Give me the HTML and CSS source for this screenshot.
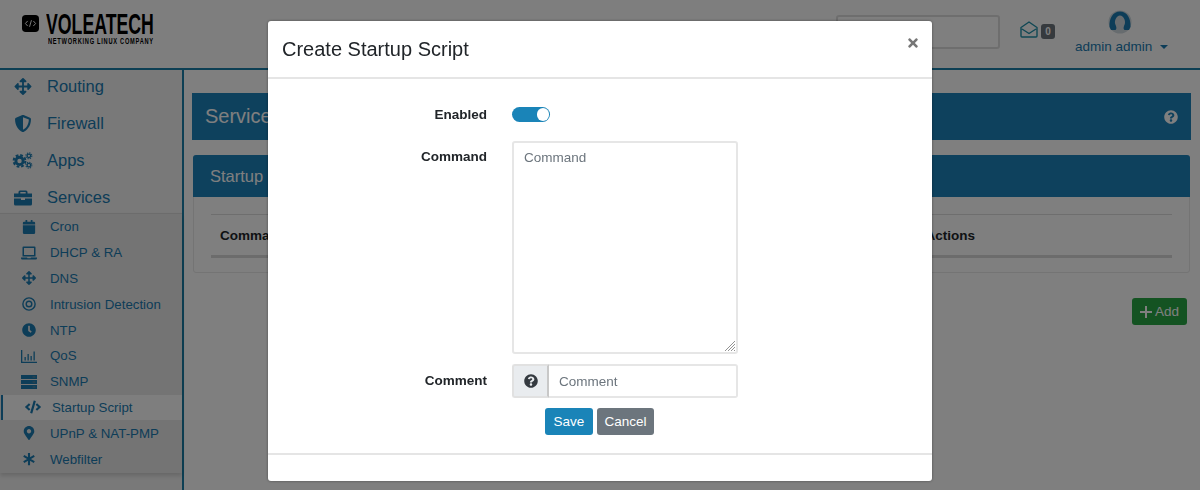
FILE: index.html
```html
<!DOCTYPE html>
<html lang="en">
<head>
<meta charset="utf-8">
<title>Startup Script</title>
<link rel="stylesheet" href="styles.css">
</head>
<body>
<div class="app">
  <header class="topbar">
    <div class="logo">
      <svg class="logo-mark" viewBox="0 0 18 18"><rect width="18" height="18" rx="4" fill="#000"/><path d="M6 6.300L3.600 9 6 11.700M12 6.300L14.400 9 12 11.700M10 5.500L8 12.500" fill="none" stroke="#fff" stroke-width="1"/></svg>
      <div class="logo-text">
        <div class="logo-name">VOLEATECH</div>
        <div class="logo-tag">NETWORKING LINUX COMPANY</div>
      </div>
    </div>
    <div class="top-right">
      <div class="search"></div>
      <svg class="mail" viewBox="0 0 18 17"><path d="M1 6.500L9 1l8 5.500V15a1 1 0 0 1-1 1H2a1 1 0 0 1-1-1zM2 8l7 4.500L16 8" fill="none" stroke="currentColor" stroke-width="1.400" stroke-linejoin="round"/></svg>
      <span class="badge">0</span>
      <div class="user">
        <svg class="avatar" viewBox="0 0 24 24"><circle cx="12" cy="12" r="11.500" fill="#cfd8de"/><path d="M1.500 17C1 8 5 1.500 12 1.500S23 8 22.500 17L21 20h-4.500c-1.500-1-1-3 .3-6 1-3-1-8.500-4.800-8.500S6.200 11 7.200 14c1.300 3 1.800 5 .3 6H3z" fill="currentColor"/></svg>
        <div class="user-name">admin admin <span class="caret"></span></div>
      </div>
    </div>
  </header>
  <div class="content">
    <aside class="sidebar">
      <nav class="nav-main">
        <a class="nav-item"><svg class="ic-main" viewBox="0 0 512 512"><path d="M352.201 425.775l-79.196 79.196c-9.373 9.373-24.568 9.373-33.941 0l-79.196-79.196c-15.119-15.119-4.411-40.971 16.971-40.97h51.162L228 284H127.196v51.162c0 21.382-25.851 32.09-40.971 16.971L7.029 272.937c-9.373-9.373-9.373-24.569 0-33.941L86.225 159.8c15.119-15.119 40.971-4.411 40.971 16.971V228H228V127.196h-51.23c-21.382 0-32.09-25.851-16.971-40.971l79.196-79.196c9.373-9.373 24.568-9.373 33.941 0l79.196 79.196c15.119 15.119 4.411 40.971-16.971 40.971h-51.162V228h100.804v-51.162c0-21.382 25.851-32.09 40.97-16.971l79.196 79.196c9.373 9.373 9.373 24.569 0 33.941L425.773 352.2c-15.119 15.119-40.971 4.411-40.97-16.971V284H284v100.804h51.23c21.382 0 32.09 25.851 16.971 40.971z"/></svg>Routing</a>
        <a class="nav-item"><svg class="ic-main" viewBox="0 0 512 512"><path d="M466.5 83.7l-192-80a48.15 48.15 0 0 0-36.9 0l-192 80C27.7 91.1 16 108.6 16 128c0 198.5 114.5 335.7 221.5 380.3 11.8 4.9 25.1 4.9 36.9 0C360.1 472.6 496 349.3 496 128c0-19.4-11.7-36.9-29.5-44.3zM256.1 446.3l-.1-381 175.9 73.3c-3.3 151.4-82.1 261.1-175.8 307.7z"/></svg>Firewall</a>
        <a class="nav-item"><svg class="ic-main ic-wide" viewBox="0 0 24 20"><g fill="none" stroke="currentColor"><circle cx="8.500" cy="10.500" r="4.300" stroke-width="3.400"/><circle cx="8.500" cy="10.500" r="6.900" stroke-width="2.400" stroke-dasharray="3.200 2.220"/><circle cx="19.500" cy="4.500" r="2.100" stroke-width="1.500"/><circle cx="19.500" cy="15.500" r="2.100" stroke-width="1.500"/><circle cx="19.500" cy="4.500" r="3.500" stroke-width="1.200" stroke-dasharray="1.500 1.250"/><circle cx="19.500" cy="15.500" r="3.500" stroke-width="1.200" stroke-dasharray="1.500 1.250"/></g></svg>Apps</a>
        <a class="nav-item"><svg class="ic-main" viewBox="0 0 18 16"><path d="M6 1h6a1.500 1.500 0 0 1 1.500 1.500V4H18v3.800H0V4h4.500V2.500A1.500 1.500 0 0 1 6 1zm.300 1.500V4h5.400V2.500zM0 9h7v1.500h4V9h7v5.500A1.500 1.500 0 0 1 16.500 16h-15A1.500 1.500 0 0 1 0 14.500z"/></svg>Services</a>
      </nav>
      <nav class="nav-sub">
        <a class="sub-item"><svg class="ic-sub" viewBox="0 0 14 16"><path d="M3 0h2v2h4V0h2v2h1.500A1.500 1.500 0 0 1 14 3.500V5H0V3.500A1.500 1.500 0 0 1 1.500 2H3zM0 6h14v8.500a1.500 1.500 0 0 1-1.500 1.500h-11A1.500 1.500 0 0 1 0 14.500z"/></svg>Cron</a>
        <a class="sub-item"><svg class="ic-sub" viewBox="0 0 16 13"><path d="M2.500 0h11a1 1 0 0 1 1 1v9h-13V1a1 1 0 0 1 1-1zm.5 1.500v7h10v-7zM0 11h6l.5.700h3l.5-.700h6v.700a1.300 1.300 0 0 1-1.300 1.300H1.300A1.300 1.300 0 0 1 0 11.700z"/></svg>DHCP &amp; RA</a>
        <a class="sub-item"><svg class="ic-sub" viewBox="0 0 512 512"><path d="M352.201 425.775l-79.196 79.196c-9.373 9.373-24.568 9.373-33.941 0l-79.196-79.196c-15.119-15.119-4.411-40.971 16.971-40.97h51.162L228 284H127.196v51.162c0 21.382-25.851 32.09-40.971 16.971L7.029 272.937c-9.373-9.373-9.373-24.569 0-33.941L86.225 159.8c15.119-15.119 40.971-4.411 40.971 16.971V228H228V127.196h-51.23c-21.382 0-32.09-25.851-16.971-40.971l79.196-79.196c9.373-9.373 24.568-9.373 33.941 0l79.196 79.196c15.119 15.119 4.411 40.971-16.971 40.971h-51.162V228h100.804v-51.162c0-21.382 25.851-32.09 40.97-16.971l79.196 79.196c9.373 9.373 9.373 24.569 0 33.941L425.773 352.2c-15.119 15.119-40.971 4.411-40.97-16.971V284H284v100.804h51.23c21.382 0 32.09 25.851 16.971 40.971z"/></svg>DNS</a>
        <a class="sub-item"><svg class="ic-sub" viewBox="0 0 16 16"><circle cx="8" cy="8" r="7" fill="none" stroke="currentColor" stroke-width="1.600"/><circle cx="8" cy="8" r="3.200" fill="none" stroke="currentColor" stroke-width="1.600"/></svg>Intrusion Detection</a>
        <a class="sub-item"><svg class="ic-sub" viewBox="0 0 512 512"><path d="M256,8C119,8,8,119,8,256S119,504,256,504,504,393,504,256,393,8,256,8Zm92.49,313h0l-20,25a16,16,0,0,1-22.49,2.5h0l-67-49.72a40,40,0,0,1-15-31.23V112a16,16,0,0,1,16-16h32a16,16,0,0,1,16,16V256l58,42.5A16,16,0,0,1,348.49,321Z"/></svg>NTP</a>
        <a class="sub-item"><svg class="ic-sub" viewBox="0 0 16 14"><path d="M0 1h1.300v11.700H16V14H0zM3.500 8h1.300v3.500H3.500zM6.500 5h1.300v6.500H6.500zM9.500 7h1.300v4.500H9.500zM12.500 2.500h1.300v9h-1.300z"/></svg>QoS</a>
        <a class="sub-item"><svg class="ic-sub" viewBox="0 0 16 14"><path d="M0 0h16v4H0zM0 5h16v4H0zM0 10h16v4H0z"/><path d="M11.500 2h3M11.500 7h3M11.500 12h3" stroke="#8a8a8a" stroke-width=".8"/></svg>SNMP</a>
        <a class="sub-item sub-active"><svg class="ic-sub" viewBox="0 0 640 512"><path d="M278.9 511.5l-61-17.7c-6.4-1.8-10-8.5-8.2-14.9L346.2 8.7c1.8-6.4 8.5-10 14.9-8.2l61 17.7c6.4 1.8 10 8.5 8.2 14.9L293.8 503.3c-1.9 6.4-8.5 10.1-14.9 8.2zm-114-112.2l43.5-46.4c4.6-4.9 4.3-12.7-.8-17.2L117 256l90.6-79.7c5.1-4.5 5.5-12.3.8-17.2l-43.5-46.4c-4.5-4.8-12.1-5.1-17-.5L3.8 247.2c-5.1 4.7-5.1 12.8 0 17.5l144.1 135.1c4.9 4.6 12.5 4.4 17-.5zm327.2.6l144.1-135.1c5.1-4.7 5.1-12.8 0-17.5L492.1 112.1c-4.8-4.5-12.4-4.3-17 .5L431.6 159c-4.6 4.9-4.3 12.7.8 17.2L523 256l-90.6 79.7c-5.1 4.5-5.5 12.3-.8 17.2l43.5 46.4c4.5 4.9 12.1 5.1 17 .6z"/></svg>Startup Script</a>
        <a class="sub-item"><svg class="ic-sub" viewBox="0 0 384 512"><path d="M172.268 501.67C26.97 291.031 0 268.413 0 192 0 85.961 85.961 0 192 0s192 85.961 192 192c0 76.413-26.97 99.031-172.268 309.67-9.535 13.774-29.93 13.773-39.464 0zM192 272c44.183 0 80-35.817 80-80s-35.817-80-80-80-80 35.817-80 80 35.817 80 80 80z"/></svg>UPnP &amp; NAT-PMP</a>
        <a class="sub-item"><svg class="ic-sub" viewBox="0 0 16 16"><path d="M8 1v14M2 4.500l12 7M14 4.500l-12 7" fill="none" stroke="currentColor" stroke-width="2.400"/></svg>Webfilter</a>
      </nav>
    </aside>
    <main class="main">
      <div class="banner">
        <span>Services</span>
        <svg class="banner-help" viewBox="0 0 512 512"><path d="M504 256c0 136.997-111.043 248-248 248S8 392.997 8 256C8 119.083 119.043 8 256 8s248 111.083 248 248zM262.655 90c-54.497 0-89.255 22.957-116.549 63.758-3.536 5.286-2.353 12.415 2.715 16.258l34.699 26.31c5.205 3.947 12.621 3.008 16.665-2.122 17.864-22.658 30.113-35.797 57.303-35.797 20.429 0 45.698 13.148 45.698 32.958 0 14.976-12.363 22.667-32.534 33.976C247.128 238.528 216 254.941 216 296v4c0 6.627 5.373 12 12 12h56c6.627 0 12-5.373 12-12v-1.333c0-28.462 83.186-29.647 83.186-106.667 0-58.002-60.165-102-116.531-102zM256 338c-25.365 0-46 20.635-46 46 0 25.364 20.635 46 46 46s46-20.636 46-46c0-25.365-20.635-46-46-46z"/></svg>
      </div>
      <section class="card">
        <div class="card-head">Startup Script</div>
        <div class="card-body">
          <div class="table-head"><span>Command</span><span>Actions</span></div>
        </div>
      </section>
      <div class="actions">
        <button class="add" type="button"><svg class="plus" viewBox="0 0 12 12"><path d="M6 .5v11M.5 6h11" fill="none" stroke="currentColor" stroke-width="2" stroke-linecap="round"/></svg>Add</button>
      </div>
    </main>
  </div>
</div>
<div class="backdrop"></div>
<div class="modal">
  <div class="modal-head">
    <h2>Create Startup Script</h2>
    <svg class="close" viewBox="0 0 352 512"><path d="M242.72 256l100.07-100.07c12.28-12.28 12.28-32.19 0-44.48l-22.24-22.24c-12.28-12.28-32.19-12.28-44.48 0L176 189.28 75.93 89.21c-12.28-12.28-32.19-12.28-44.48 0L9.21 111.45c-12.28 12.28-12.28 32.19 0 44.48L109.28 256 9.21 356.07c-12.28 12.28-12.28 32.19 0 44.48l22.24 22.24c12.28 12.28 32.2 12.28 44.48 0L176 322.72l100.07 100.07c12.28 12.28 32.2 12.28 44.48 0l22.24-22.24c12.28-12.28 12.28-32.19 0-44.48L242.72 256z"/></svg>
  </div>
  <form class="modal-body">
    <label class="lbl lbl-toggle">Enabled</label>
    <div class="toggle"><span class="knob"></span></div>
    <label class="lbl lbl-cmd">Command</label>
    <div class="cmd-wrap">
      <textarea class="cmd" placeholder="Command"></textarea>
      <svg class="grip" viewBox="0 0 12 12"><path d="M11 1L1 11M11 4L4 11M11 7L7 11M11 10L10 11" fill="none" stroke="#777" stroke-width=".8"/></svg>
    </div>
    <label class="lbl lbl-comment">Comment</label>
    <div class="group">
      <span class="prepend"><svg class="q" viewBox="0 0 512 512"><path d="M504 256c0 136.997-111.043 248-248 248S8 392.997 8 256C8 119.083 119.043 8 256 8s248 111.083 248 248zM262.655 90c-54.497 0-89.255 22.957-116.549 63.758-3.536 5.286-2.353 12.415 2.715 16.258l34.699 26.31c5.205 3.947 12.621 3.008 16.665-2.122 17.864-22.658 30.113-35.797 57.303-35.797 20.429 0 45.698 13.148 45.698 32.958 0 14.976-12.363 22.667-32.534 33.976C247.128 238.528 216 254.941 216 296v4c0 6.627 5.373 12 12 12h56c6.627 0 12-5.373 12-12v-1.333c0-28.462 83.186-29.647 83.186-106.667 0-58.002-60.165-102-116.531-102zM256 338c-25.365 0-46 20.635-46 46 0 25.364 20.635 46 46 46s46-20.636 46-46c0-25.365-20.635-46-46-46z"/></svg></span>
      <input class="comment" type="text" placeholder="Comment">
    </div>
    <div class="buttons">
      <button class="btn btn-save" type="button">Save</button>
      <button class="btn btn-cancel" type="button">Cancel</button>
    </div>
  </form>
  <div class="modal-foot"></div>
</div>
</body>
</html>
```
FILE: styles.css
```css
* { box-sizing: border-box; }
html, body { margin: 0; height: 490px; overflow: hidden; }
body { font-family: "Liberation Sans", Arial, sans-serif; color: #212529; background: #fff; }
svg { fill: currentColor; display: block; flex: none; }

.app { display: flex; flex-direction: column; height: 490px; }

.topbar { height: 70px; flex: none; display: flex; justify-content: space-between; border-bottom: 2px solid #1a7fa8; background: #fdfdfd; }
.logo { display: flex; padding: 12px 0 0 22px; gap: 7px; }
.logo-mark { width: 17px; height: 17px; margin-top: 3px; }
.logo-text { width: 108px; color: #000; }
.logo-name { font-weight: 700; font-size: 30px; line-height: 24px; white-space: nowrap; transform: scaleX(.59); transform-origin: left center; }
.logo-tag { font-weight: 700; font-size: 9.500px; line-height: 8px; letter-spacing: 1.200px; margin: 1px 0 0 2px; white-space: nowrap; transform: scaleX(.6); transform-origin: left center; }

.top-right { display: flex; align-items: flex-start; padding-right: 33px; }
.search { width: 164px; height: 34px; margin-top: 15px; border: 2px solid #ddd; border-radius: 3px; background: #fff; }
.mail { width: 18px; height: 17px; margin: 21px 0 0 20px; color: #1f8fa8; }
.badge { width: 14px; height: 15px; margin: 24px 0 0 3px; background: #6c757d; border-radius: 3px; color: #fff; font-size: 10px; font-weight: 700; line-height: 15px; text-align: center; }
.user { width: 92px; margin: 10px 0 0 20px; display: flex; flex-direction: column; align-items: flex-start; color: #1a7ab0; }
.avatar { width: 24px; height: 24px; margin-left: 33px; }
.user-name { margin-top: 5px; font-size: 13.500px; line-height: 16px; white-space: nowrap; }
.caret { display: inline-block; width: 0; height: 0; margin-left: 4px; vertical-align: 2px; border: 4px solid transparent; border-top-color: #1a7ab0; border-bottom: 0; }

.content { flex: 1; display: flex; min-height: 0; }

.sidebar { width: 184px; flex: none; border-right: 2px solid #1a7fa8; background: #f2f2f2; color: #1a7ab0; }
.nav-main { height: 145px; margin-top: -2px; }
.nav-item { height: 37px; display: flex; align-items: center; gap: 15px; padding-left: 14px; font-size: 16.500px; }
.ic-main { width: 18px; height: 17px; }
.ic-wide { width: 21px; margin-left: -2px; margin-right: -1px; }
.nav-sub { padding: 0 0 1px; background: #e8e8e8; border-top: 1px solid #d8d8d8; box-shadow: 0 3px 4px rgba(0,0,0,.14); }
.sub-item { height: 25.800px; display: flex; align-items: center; gap: 13px; padding-left: 21px; font-size: 13.300px; }
.ic-sub { width: 16px; height: 14px; }
.sub-active { gap: 11px; padding-left: 25px; background: #fdfdfd; box-shadow: inset 1px 0 0 #e8e8e8, inset 3px 0 0 #1a7ab0; }

.main { flex: 1; padding: 23px 9px 0 8px; min-width: 0; }
.banner { height: 47px; display: flex; justify-content: space-between; align-items: center; padding: 0 13px; background: #1c82bb; color: #fff; font-size: 20px; }
.banner-help { width: 14px; height: 14px; }
.card { margin: 15px 1px 0; border: 1px solid #e8e8e8; border-radius: 3px; background: #fff; }
.card-head { height: 42px; margin: -1px -1px 0; padding: 0 17px; display: flex; align-items: center; background: #1c82bb; color: #fff; font-size: 16.500px; border-radius: 3px 3px 0 0; }
.card-body { padding: 17px 17px 14px; }
.table-head { height: 44px; display: flex; justify-content: space-between; align-items: center; padding: 0 197px 0 9px; border-top: 1px solid #ddd; border-bottom: 3px solid #d8d8d8; font-size: 13.500px; font-weight: 700; }
.actions { display: flex; justify-content: flex-end; padding: 25px 4px 0 0; }
.add { width: 55px; height: 27px; padding: 0; display: flex; align-items: center; justify-content: center; gap: 3px; border: 0; border-radius: 3px; background: #28a745; color: #fff; font: 13.500px "Liberation Sans", sans-serif; }
.plus { width: 12px; height: 12px; }

.backdrop { position: fixed; inset: 0; background: rgba(0,0,0,.5); }

.modal { position: fixed; left: 268px; top: 21px; width: 664px; height: 460px; display: flex; flex-direction: column; background: #fff; border-radius: 3px; box-shadow: 0 0 3px rgba(0,0,0,.4); }
.modal-head { height: 58px; flex: none; display: flex; justify-content: space-between; align-items: center; padding: 0 14px; border-bottom: 2px solid #e5e5e5; }
.modal-head h2 { margin: 0; font-size: 20px; font-weight: 400; color: #212529; }
.close { width: 10px; height: 14px; margin-top: -12px; color: #777; }
.modal-body { flex: 1; display: grid; grid-template-columns: 219px 226px; column-gap: 25px; align-content: start; padding-top: 28px; }
.lbl { justify-self: end; font-size: 13.500px; font-weight: 700; }
.lbl-toggle { line-height: 15px; }
.lbl-cmd { margin-top: 27px; }
.lbl-comment { margin-top: 19px; }
.toggle { width: 38px; height: 15px; display: flex; justify-content: flex-end; align-items: center; padding-right: 1px; border-radius: 8px; background: #1a84b8; }
.knob { width: 12.500px; height: 12.500px; border-radius: 50%; background: #fff; }
.cmd-wrap { position: relative; height: 213px; margin-top: 19px; }
.cmd { display: block; width: 226px; height: 213px; padding: 7px 10px; border: 2px solid #e6e6e6; border-radius: 3px; font: 13.500px "Liberation Sans", sans-serif; resize: none; outline: 0; }
.grip { position: absolute; right: 2px; bottom: 2px; width: 12px; height: 12px; }
.cmd::placeholder, .comment::placeholder { color: #6c757d; opacity: 1; }
.group { display: flex; height: 34px; margin-top: 10px; }
.prepend { width: 37px; flex: none; display: flex; align-items: center; justify-content: center; background: #e9ecef; border: 2px solid #e1e1e1; border-right-color: #c8c8c8; border-radius: 3px 0 0 3px; }
.q { width: 14px; height: 14px; color: #343a40; }
.comment { flex: 1; min-width: 0; padding: 0 10px; border: 2px solid #e6e6e6; border-left: 0; border-radius: 0 3px 3px 0; font: 13.500px "Liberation Sans", sans-serif; outline: 0; }
.buttons { grid-column: 1 / -1; display: flex; gap: 4px; margin: 10px 0 0 277px; }
.btn { height: 27px; padding: 0; border: 0; border-radius: 3px; color: #fff; font: 13.500px "Liberation Sans", sans-serif; }
.btn-save { width: 48px; background: #1a84b8; }
.btn-cancel { width: 57px; background: #6c757d; }
.modal-foot { height: 28px; flex: none; border-top: 2px solid #e5e5e5; }
```
